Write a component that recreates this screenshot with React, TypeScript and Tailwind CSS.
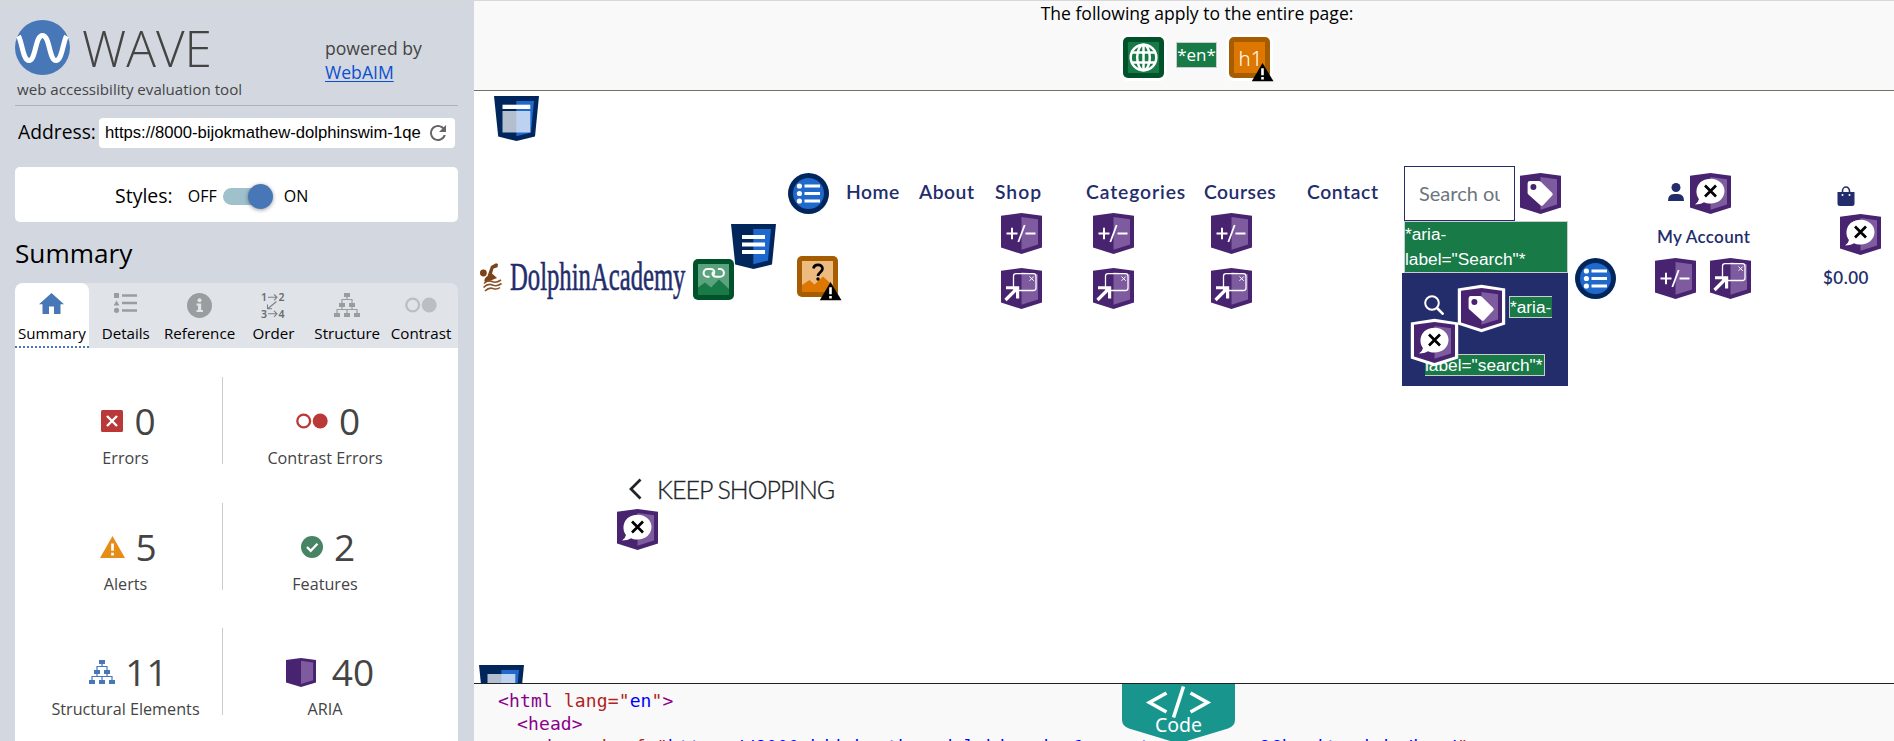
import React, { ReactNode } from "react";

type IconProps = { className?: string };

/* ---------- ARIA badges ---------- */

function Aria({ className = "", halo = false, children }: IconProps & { halo?: boolean; children?: ReactNode }) {
  return (
    <svg className={`block h-[41px] w-[41px] shrink-0 overflow-visible ${className}`} viewBox="0 0 41 41">
      {halo && <path d="M-3.2 .4 20.5-3.2 44.2 .4V36.5L20.5 44.2-3.2 36.5Z" fill="#fff" />}
      <path d="M0 2.8 20.5 0 41 2.8V34.5L20.5 41 0 34.5Z" fill="#48236f" />
      <path d="M20.5 4 37 6.2V31.4L20.5 36.8Z" fill="#7d5b9e" />
      {children}
    </svg>
  );
}

function AriaTag(p: IconProps & { halo?: boolean }) {
  return (
    <Aria {...p}>
      <path d="M10 8H19Q20 8 20.8 8.7L32.2 20Q33.4 21.4 32.2 22.6L23 32.2Q21.8 33.4 20.4 32.2L8.4 21.6Q7.6 20.8 7.6 20V10.4Q7.6 8 10 8Z" fill="#fff" />
      <circle cx="13.4" cy="14" r="3" fill="#48236f" />
    </Aria>
  );
}

function AriaHidden(p: IconProps & { halo?: boolean }) {
  return (
    <Aria {...p}>
      <path d="M5 31.5Q8.5 29 9 26C4 20 6 6 20.5 5.8 29 5.8 34.5 11.5 34.5 18 34.5 25 28.5 30.5 20.5 30.5 17.5 30.5 15.5 30 14 29.2 11.5 30.5 8.5 31.5 5 31.5Z" fill="#fff" />
      <path d="M15 12.5 26 23.5M26 12.5 15 23.5" stroke="#000" strokeWidth="2.7" />
    </Aria>
  );
}

function AriaExpanded({ className }: IconProps) {
  return (
    <Aria className={className}>
      <path d="M5.5 20.5H16.5M11 14.8V26.3M24.5 20.5H34.5" stroke="#fff" strokeWidth="2" />
      <path d="M17.3 29 23.7 12" stroke="#fff" strokeWidth="1.8" />
    </Aria>
  );
}

function AriaPopup({ className }: IconProps) {
  return (
    <Aria className={className}>
      <rect x="12.5" y="5.7" width="22.5" height="16.8" rx="2.5" fill="none" stroke="#fff" strokeWidth="1.3" />
      <path d="M28.5 8.5 32.8 12.8M32.8 8.5 28.5 12.8" stroke="#fff" strokeWidth="1" />
      <path d="M4.5 32 15.5 21" stroke="#fff" strokeWidth="3.2" />
      <path d="M5 18.2H18.2V30.5H15V21.2H5Z" fill="#fff" />
    </Aria>
  );
}

/* ---------- Structure badges ---------- */

function Landmark({ className = "", children }: IconProps & { children?: ReactNode }) {
  return (
    <svg className={`block h-[45px] w-[45px] shrink-0 ${className}`} viewBox="0 0 45 45">
      <path d="M0 0H45L41 40.5 22.5 45 4.2 40.5Z" fill="#00265c" />
      <path d="M22.3 5H40L37 36.5 22.3 40.3Z" fill="#1f69cc" />
      {children}
    </svg>
  );
}

function ListBadge({ className = "" }: IconProps) {
  return (
    <svg className={`block h-[41px] w-[41px] shrink-0 ${className}`} viewBox="0 0 41 41">
      <circle cx="20.5" cy="20.5" r="20.5" fill="#00265c" />
      <circle cx="20.5" cy="20.5" r="15.5" fill="#1f69cc" />
      {[13, 20.5, 28].map((y) => (
        <g key={y} fill="#fff">
          <circle cx="11.4" cy={y} r="2.6" />
          <rect x="16.5" y={y - 1.5} width="15.5" height="3" />
        </g>
      ))}
    </svg>
  );
}

/* ---------- Square badges ---------- */

function Square({ className = "", edge, fill, children }: IconProps & { edge: string; fill: string; children?: ReactNode }) {
  return (
    <svg className={`block h-[41px] w-[41px] shrink-0 overflow-visible ${className}`} viewBox="0 0 41 41">
      <rect width="41" height="41" rx="5" fill={edge} />
      <rect x="5" y="5" width="31" height="31" fill={fill} />
      {children}
    </svg>
  );
}

function AlertCorner() {
  return (
    <g>
      <path d="M33.5 26 44.5 44.3H22.8Z" fill="#000" />
      <path d="M33.5 31.2V38.2M33.5 40V42.4" stroke="#fff" strokeWidth="2.6" />
    </g>
  );
}

/* ---------- Sidebar icons ---------- */

function Tree({ className = "", color }: IconProps & { color: string }) {
  return (
    <svg className={className} viewBox="0 0 26 24">
      <g fill={color}>
        <rect x="10" y="0" width="6" height="4" />
        <rect x="5" y="10" width="6" height="4" />
        <rect x="15" y="10" width="6" height="4" />
        <rect x="0" y="20" width="6" height="4" />
        <rect x="10" y="20" width="6" height="4" />
        <rect x="20" y="20" width="6" height="4" />
      </g>
      <path d="M13 4V6.5M8 10V6.5H18V10M8 14V16.5M18 14V16.5M3 20V16.5H23V20M13 20V16.5" fill="none" stroke={color} strokeWidth="1.2" />
    </svg>
  );
}

function Circles({ className = "", color }: IconProps & { color: string }) {
  return (
    <svg className={className} viewBox="0 0 32 16">
      <circle cx="7.7" cy="8" r="6.4" fill="none" stroke={color} strokeWidth="2.3" />
      <circle cx="24.2" cy="8" r="7.5" fill={color} />
    </svg>
  );
}

const tabs: { label: string; icon: ReactNode }[] = [
  {
    label: "Summary",
    icon: (
      <svg className="h-[22px] w-[25px]" viewBox="0 0 25 22">
        <path d="M12.5 0 25 11.3H21.5V21H15V13.5H10V21H3.5V11.3H0Z" fill="#4877b8" />
      </svg>
    ),
  },
  {
    label: "Details",
    icon: (
      <svg className="mb-0.5 h-5 w-[23px]" viewBox="0 0 23 20">
        <path d="M0 0H5V5H0ZM2.5 7.5 5.5 12.5H-.5ZM8 1.2H23V3.7H8ZM8 8.7H23V11.2H8ZM8 16.2H23V18.7H8Z" fill="#9a9d9f" />
        <circle cx="2.5" cy="17.3" r="2.6" fill="#9a9d9f" />
      </svg>
    ),
  },
  {
    label: "Reference",
    icon: (
      <svg className="-mb-[3px] h-[25px] w-[25px]" viewBox="0 0 25 25">
        <circle cx="12.5" cy="12.5" r="12.5" fill="#9a9d9f" />
        <circle cx="12.5" cy="7.3" r="2" fill="#e0e3e8" />
        <path d="M9.5 10.5H14.2V17H16V19H9.5V17H11V12.5H9.5Z" fill="#e0e3e8" />
      </svg>
    ),
  },
  {
    label: "Order",
    icon: (
      <svg className="-mb-[3px] h-[25px] w-6" viewBox="0 0 24 25">
        <g fill="#686b6d" fontFamily="Noto Sans, sans-serif" fontSize="10.5" fontWeight="600">
          <text x="0" y="8">1</text>
          <text x="17.5" y="8">2</text>
          <text x="0" y="24.5">3</text>
          <text x="17.5" y="24.5">4</text>
        </g>
        <path d="M7 4.3H16M13 1.3 16 4.3 13 7.3M7 20.8H16M13 17.8 16 20.8 13 23.8M15.5 8.5 7 15.5M6.5 11.5V15.8H11" fill="none" stroke="#7d8082" strokeWidth="1.1" />
      </svg>
    ),
  },
  { label: "Structure", icon: <Tree className="-mb-0.5 h-6 w-[26px]" color="#9a9d9f" /> },
  { label: "Contrast", icon: <Circles className="mb-0.5 h-4 w-8" color="#bbbec2" /> },
];

type Stat = { label: string; value: string; icon: ReactNode };
const stats: [Stat, Stat][] = [
  [
    {
      label: "Errors",
      value: "0",
      icon: (
        <svg className="mr-[11px] h-[22px] w-[22px]" viewBox="0 0 22 22">
          <rect width="22" height="22" rx="1.5" fill="#bb3838" />
          <path d="M6 6 16 16M16 6 6 16" stroke="#fff" strokeWidth="2.4" />
        </svg>
      ),
    },
    { label: "Contrast Errors", value: "0", icon: <Circles className="mr-[11px] h-4 w-8" color="#bb3838" /> },
  ],
  [
    {
      label: "Alerts",
      value: "5",
      icon: (
        <svg className="mr-2.5 h-[22px] w-[25px]" viewBox="0 0 25 22">
          <path d="M12.5 0 25 22H0Z" fill="#e58d17" />
          <path d="M12.5 7.5V14.7M12.5 16.8V19.6" stroke="#fff" strokeWidth="2.7" />
        </svg>
      ),
    },
    {
      label: "Features",
      value: "2",
      icon: (
        <svg className="mr-[11px] h-[22px] w-[22px]" viewBox="0 0 22 22">
          <circle cx="11" cy="11" r="11" fill="#478464" />
          <path d="M6 11 9.7 14.8 16.5 7.8" fill="none" stroke="#fff" strokeWidth="2.3" />
        </svg>
      ),
    },
  ],
  [
    { label: "Structural Elements", value: "11", icon: <Tree className="mr-2.5 h-6 w-[26px]" color="#4877b8" /> },
    {
      label: "ARIA",
      value: "40",
      icon: (
        <svg className="mr-4 ml-1 h-[29px] w-[30px]" viewBox="0 0 41 41" preserveAspectRatio="none">
          <path d="M0 2.8 20.5 0 41 2.8V34.5L20.5 41 0 34.5Z" fill="#48236f" />
          <path d="M20.5 4 37 6.2V31.4L20.5 36.8Z" fill="#7d5b9e" />
        </svg>
      ),
    },
  ],
];

function StatCell({ stat }: { stat: Stat }) {
  return (
    <div className="flex flex-col items-center text-[#444]">
      <div className="flex h-[50px] items-center pl-1.5">
        {stat.icon}
        <span className="text-[37px] leading-[50px]">{stat.value}</span>
      </div>
      <div className="text-[16.2px] leading-6">{stat.label}</div>
    </div>
  );
}

function Sidebar() {
  return (
    <aside className="flex w-[474px] shrink-0 flex-col border-t border-[#d8d8d8] bg-[#d3d8e0] pr-4 pl-[15px] font-['Open_Sans',sans-serif] text-black">
      <header className="flex h-[105px] justify-between border-b border-[#b0b4b8] text-[#444]">
        <div>
          <div className="flex pt-[19px]">
            <svg className="h-[55px] w-[55px]" viewBox="0 0 55 55">
              <circle cx="27.5" cy="27.5" r="27.5" fill="#4877b8" />
              <path d="M3.5 16C7 22 8 40.5 14 40.5 21 40.5 20 15.5 27.5 15.5 35 15.5 34 40.5 41 40.5 47 40.5 48 22 51.5 16" fill="none" stroke="#fff" strokeWidth="5" />
            </svg>
            <span className="ml-3 h-[55px] text-[49.5px] leading-[57px] font-light">WAVE</span>
          </div>
          <div className="mt-1 ml-0.5 text-[15.1px] leading-5 text-[#444]">web accessibility evaluation tool</div>
        </div>
        <div className="w-[133px] pt-[35px] text-[17.6px] leading-6">
          powered by
          <br />
          <a className="text-[#0b4fd0] underline decoration-1 underline-offset-2">WebAIM</a>
        </div>
      </header>
      <div className="mt-3 flex h-[30px] items-center">
        <label className="-mt-[3px] w-[84px] pl-[3px] text-[19.3px] leading-[26px]">Address:</label>
        <div className="flex h-[30px] w-[356px] items-center rounded bg-white pl-1.5">
          <span className="-mt-px font-['Liberation_Sans',sans-serif] text-[16.67px]">https://8000-bijokmathew-dolphinswim-1qe</span>
          <svg className="ml-[9px] h-4 w-4" viewBox="4 4 16 16">
            <path d="M17.65 6.35C16.2 4.9 14.21 4 12 4c-4.42 0-7.99 3.58-7.99 8s3.57 8 7.99 8c3.73 0 6.84-2.55 7.73-6h-2.08c-.82 2.33-3.04 4-5.65 4-3.31 0-6-2.69-6-6s2.69-6 6-6c1.66 0 3.14.69 4.22 1.78L13 11h7V4l-2.35 2.35z" fill="#666" />
          </svg>
        </div>
      </div>
      <div className="mt-[19px] flex h-[55px] items-center rounded-[5px] bg-white pt-0.5 pl-[100px]">
        <span className="text-[19.5px] leading-6">Styles:</span>
        <span className="ml-[15px] w-[35px] text-[16px]">OFF</span>
        <span className="relative mt-0.5 h-[17px] w-[45px] rounded-full bg-[#9fc1cb]">
          <span className="absolute -top-1 left-[25px] h-[25px] w-[25px] rounded-full bg-[#4877b8] shadow-[0_1px_4px_rgba(0,0,0,0.4)]" />
        </span>
        <span className="ml-4 text-[16px]">ON</span>
      </div>
      <h2 className="mt-[13px] text-[26.2px] leading-9">Summary</h2>
      <div className="mt-3 flex h-[65px] shrink-0 rounded-t-lg bg-[#e0e3e8]">
        {tabs.map((t, i) => (
          <div
            key={t.label}
            className={`flex w-[73.9px] flex-col items-center justify-end whitespace-nowrap text-[15.15px] ${
              i === 0 ? "rounded-t-lg border-b-2 border-dotted border-[#4877b8] bg-white pb-[3px]" : "pb-[5px]"
            }`}
          >
            {t.icon}
            <span className="mt-2 leading-5">{t.label}</span>
          </div>
        ))}
      </div>
      <div className="h-[393px] overflow-hidden bg-white pt-[29px]">
        {stats.map(([a, b], i) => (
          <div key={i} className="flex h-[125.7px]">
            <div className="h-[87px] w-[207px] shrink-0 pt-[19px] pl-[14px]">
              <StatCell stat={a} />
            </div>
            <div className="h-[87px] w-[205px] shrink-0 border-l border-[#ccc] pt-[19px]">
              <StatCell stat={b} />
            </div>
          </div>
        ))}
      </div>
    </aside>
  );
}

/* ---------- Inspected page ---------- */

const nav = "block whitespace-nowrap pt-[88px] text-[19.3px] font-semibold leading-[26px] text-[#232d6b]";

function NavItem({ label, width, tracking, icons = "" }: { label: string; width: string; tracking: string; icons?: string }) {
  return (
    <div className={`shrink-0 ${width}`}>
      <a className={`${nav} ${tracking}`}>{label}</a>
      {icons && (
        <div className={`mt-2 flex flex-col gap-3.5 ${icons}`}>
          <AriaExpanded />
          <AriaPopup />
        </div>
      )}
    </div>
  );
}

const tag = "border border-[#ccc] bg-[#187a47] font-['Liberation_Sans',sans-serif] text-[17.3px] text-white";

function PageHeader() {
  return (
    <div className="flex h-[300px] font-[Lato,sans-serif]">
      <div className="relative w-[314px] shrink-0 pt-[159px] pl-1.5">
        <Landmark className="absolute top-[5px] left-5">
          <path d="M8.5 8.7H36.3V13H8.5Z" fill="#fff" />
          <path d="M8.5 15H36.3V36.5H8.5Z" fill="#fff" opacity=".7" />
        </Landmark>
        <div className="flex h-[54px] items-center">
          <svg className="h-[29px] w-[22px] shrink-0" viewBox="0 0 22 29">
            <circle cx="3.4" cy="10" r="3.4" fill="#7a4318" />
            <path d="M11 3 16 .3 18 1 17.5 4.300 13.5 5.5 12 10.5 17 15 12 17 5 19.5Q3 16 7.5 13Z" fill="#7a4318" />
            <path d="M4 20.5Q8 16.5 12 18.5T21 17M3.5 24.5Q8 20 12.5 22T21.5 20.5M5 28Q9 24 13 25.5T20 24.5" fill="none" stroke="#8a5226" strokeWidth="1.6" />
          </svg>
          <span className="ml-2 w-[176px] shrink-0">
            <span className="-mt-px block origin-left scale-x-[0.617] font-['Liberation_Serif',serif] text-[40px] leading-[54px] text-[#232d6b] [-webkit-text-stroke:0.6px_#232d6b]">
              DolphinAcademy
            </span>
          </span>
          <Square className="mt-[5px] ml-[7px]" edge="#00522b" fill="#5ba37e">
            <path d="M5 28.5 12 23.5 18 28.5 26 20.5 36 30V36H5Z" fill="#187a47" />
            <g fill="none" stroke="#fff" strokeWidth="2">
              <path d="M16.500 17.800H14.500A3.900 3.900 0 0 1 14.500 10H17.500C21 10 22.300 12.500 20.800 15.500" />
              <path d="M25 10H27A3.900 3.900 0 0 1 27 17.800H23.500C20.500 17.800 18.500 15.500 20 12.800" />
            </g>
          </Square>
        </div>
        <Landmark className="absolute top-[133px] left-[257px]">
          <path d="M11 11H34V15H11ZM11 18.5H34V22.5H11ZM11 26H34V30H11Z" fill="#fff" />
        </Landmark>
      </div>
      <div className="w-[58px] shrink-0 pt-[82px]">
        <ListBadge />
        <Square className="mt-[42px] ml-[9px]" edge="#a65c00" fill="#edbb80">
          <path d="M5 29 12.5 24 17.5 28.5 26 20.5 36 29.5V36H5Z" fill="#dd7700" />
          <path d="M16.5 12.5C17 7.5 25.5 7.5 25.5 12.8 25.5 16 21 16.5 21 20" fill="none" stroke="#000" strokeWidth="2.7" />
          <circle cx="21" cy="23" r="1.7" />
          <AlertCorner />
        </Square>
      </div>
      <NavItem label="Home" width="w-[73px]" tracking="tracking-[0.5px]" />
      <NavItem label="About" width="w-[76px]" tracking="tracking-[0.5px]" />
      <NavItem label="Shop" width="w-[91px]" tracking="tracking-[1px]" icons="ml-1.5" />
      <NavItem label="Categories" width="w-[118px]" tracking="tracking-[0.9px]" icons="ml-[7px]" />
      <NavItem label="Courses" width="w-[103px]" tracking="tracking-[0.5px]" icons="ml-[7px]" />
      <NavItem label="Contact" width="w-[95px]" tracking="tracking-[0.6px]" />
      <div className="w-[173px] shrink-0 pt-[75px]">
        <div className="ml-0.5 flex items-center gap-[5px]">
          <div className="h-[55px] w-[111px] border border-[#232d6b] bg-white px-[14px]">
            <div className="overflow-hidden text-[20px] leading-[53px] whitespace-nowrap text-[#6c757d]">Search our site</div>
          </div>
          <AriaTag />
        </div>
        <div className={`ml-0.5 h-[52px] w-[164px] leading-[25px] ${tag}`}>
          *aria-
          <br />
          label="Search"*
        </div>
        <div className="relative h-[113px] w-[166px] bg-[#232d6b]">
          <div className="flex pt-[15px] pl-[22px]">
            <svg className="mt-[7px] h-5 w-5" viewBox="0 0 20 20">
              <circle cx="8" cy="8" r="6.8" fill="none" stroke="#fff" strokeWidth="2" />
              <path d="M13 13 19.5 19.5" stroke="#fff" strokeWidth="2.6" />
            </svg>
            <AriaTag className="ml-[17px]" halo />
            <span className={`mt-2 ml-[7px] h-[22px] w-[43px] border-r-0 leading-[20px] ${tag}`}>*aria-</span>
          </div>
          <div className={`mt-[25px] ml-[23px] h-[22px] w-[120px] border-l-0 leading-[20px] ${tag}`}>label="search"*</div>
          <AriaHidden className="absolute top-[49px] left-3" halo />
        </div>
      </div>
      <div className="w-[80px] shrink-0 pt-[167px]">
        <ListBadge />
      </div>
      <div className="w-[168px] shrink-0 pt-[82px]">
        <div className="flex">
          <svg className="mt-2.5 ml-[13px] h-[18px] w-4" viewBox="0 0 16 18">
            <circle cx="8" cy="4.5" r="4.5" fill="#232d6b" />
            <path d="M0 18Q0 11 6 11H10Q16 11 16 18Z" fill="#232d6b" />
          </svg>
          <AriaHidden className="ml-1.5" />
        </div>
        <div className="mt-[11px] ml-0.5 text-[17px] leading-6 font-semibold tracking-[0.3px] text-[#232d6b]">My Account</div>
        <div className="mt-[9px] flex gap-3.5">
          <AriaExpanded />
          <AriaPopup />
        </div>
      </div>
      <div className="w-[71px] shrink-0 pt-[95px]">
        <svg className="ml-3.5 h-5 w-[18px]" viewBox="0 0 18 20">
          <path d="M5.5 8V5A3.5 4 0 0 1 12.5 5V8" fill="none" stroke="#232d6b" strokeWidth="1.6" />
          <path d="M.5 6H17.5V17.5Q17.5 20 15 20H3Q.5 20 .5 17.5Z" fill="#232d6b" />
          <circle cx="5.5" cy="9" r="1" fill="#fff" />
          <circle cx="12.5" cy="9" r="1" fill="#fff" />
        </svg>
        <AriaHidden className="mt-2 ml-[17px]" />
        <div className="mt-[11px] text-[17px] leading-6 font-semibold tracking-[0.5px] text-[#232d6b]">$0.00</div>
      </div>
    </div>
  );
}

function CodePanel() {
  return (
    <div className="relative h-[58px] shrink-0 overflow-hidden border-t border-[#222] bg-[#f9f9f9] pt-[5px] font-['DejaVu_Sans_Mono',monospace] text-[18px] leading-[23px] tracking-[0.13px] whitespace-pre text-[#8b008b]">
      <div className="pl-[24px]">
        &lt;html <span className="text-[#b22222]">lang="<span className="text-[#00f]">en</span>"</span>&gt;
      </div>
      <div className="pl-[43px]">&lt;head&gt;</div>
      <div className="pl-[62px]">
        &lt;base <span className="text-[#b22222]">href="<span className="text-[#00f]">https://8000-bijokmathew-dolphinswim-1qeacmtrnuh.ws-eu96b.gitpod.io/bag/</span>"</span>&gt;
      </div>
      <div className="absolute top-0 left-[648px] h-[57px] w-[113px]">
        <svg className="absolute inset-0 h-[57px] w-[113px]" viewBox="0 0 113 57">
          <path d="M0 0H113V36Q113 42 106 44.5L62 57.8Q56.5 59 51 57.8L7 44.5Q0 42 0 36Z" fill="#18968e" />
          <path d="M44.5 9 27.5 18.5 44.5 28M68.5 9 85.5 18.5 68.500 28M61.5 2.5 51.5 33.5" fill="none" stroke="#fff" strokeWidth="3.6" />
        </svg>
        <div className="relative pt-[29px] text-center font-['Noto_Sans',sans-serif] text-[19.5px] leading-6 tracking-normal text-white">Code</div>
      </div>
    </div>
  );
}

export default function App() {
  return (
    <div className="flex h-[741px] w-[1894px] overflow-hidden bg-white">
      <Sidebar />
      <main className="flex min-w-0 flex-1 flex-col">
        <div className="h-[91px] shrink-0 border-t border-b border-t-[#d8d8d8] border-b-[#6b7564] bg-[#f9f9f9] font-['Open_Sans',sans-serif] text-black">
          <div className="pl-[26px] text-center text-[17.56px] leading-6">The following apply to the entire page:</div>
          <div className="mt-3 flex pl-[649px]">
            <Square className="rounded-[5px] shadow-[0_0_0_3px_#fff]" edge="#00522b" fill="#187a47">
              <g fill="none" stroke="#fff" strokeWidth="2.5">
                <circle cx="20.5" cy="20.5" r="12.8" />
                <ellipse cx="20.5" cy="20.5" rx="6.3" ry="12.8" />
                <path d="M20.5 7.5V33.5M9 15.5H32M9 25.5H32" />
              </g>
            </Square>
            <span className="mt-[5px] ml-3 h-[26px] w-[41px] border border-[#ccc] bg-[#187a47] text-center text-[17px] leading-6 text-white">*en*</span>
            <Square className="ml-3 rounded-[5px] shadow-[0_0_0_3px_#fff]" edge="#a65c00" fill="#dd7700">
              <text x="9.5" y="29" fill="#fff" fontFamily="Noto Sans, sans-serif" fontSize="20.5" fontWeight="300">h1</text>
              <AlertCorner />
            </Square>
          </div>
        </div>
        <div className="flex min-h-0 flex-1 flex-col overflow-hidden">
          <PageHeader />
          <div className="mt-[88px] flex items-center pl-[155px] font-[Lato,sans-serif]">
            <svg className="h-[22px] w-[13px]" viewBox="0 0 13 22">
              <path d="M11.5 1.5 2 11 11.5 20.5" fill="none" stroke="#212529" strokeWidth="2.8" />
            </svg>
            <span className="ml-[15px] text-[25px] leading-[30px] font-light tracking-[-1px] text-[#212529] [-webkit-text-stroke:0.3px_#212529]">KEEP SHOPPING</span>
          </div>
          <AriaHidden className="mt-[5px] ml-[143px]" />
          <Landmark className="mt-[115px] ml-[5px]">
            <path d="M8.5 9H36.3V36.5H8.5Z" fill="#fff" opacity=".7" />
          </Landmark>
        </div>
        <CodePanel />
      </main>
    </div>
  );
}
